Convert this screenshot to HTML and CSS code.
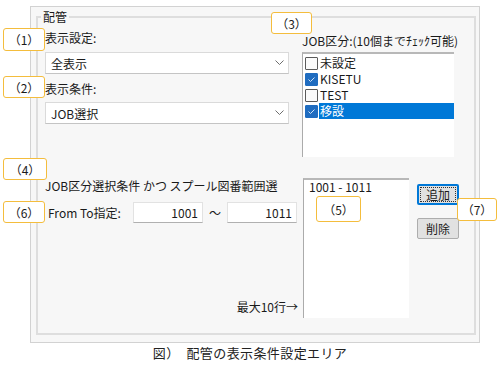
FILE: index.html
```html
<!DOCTYPE html>
<html lang="ja">
<head>
    <meta charset="UTF-8">
    <title>配管の表示条件設定エリア</title>
    <link rel="stylesheet" href="styles.css">
</head>
<body>
    <div class="page">
        <div class="frame">
            <fieldset class="group">
                <legend>配管</legend>
                <div class="top">
                    <div class="col-left">
                        <div class="label l1">表示設定:</div>
                        <div class="combo">
                            <span>全表示</span>
                            <svg width="9" height="6" viewBox="0 0 9 6"><polyline points="0.5,0.5 4.5,4.5 8.5,0.5" fill="none" stroke="#6d6d6d" stroke-width="1"/></svg>
                        </div>
                        <div class="label l2">表示条件:</div>
                        <div class="combo c2">
                            <span>JOB選択</span>
                            <svg width="9" height="6" viewBox="0 0 9 6"><polyline points="0.5,0.5 4.5,4.5 8.5,0.5" fill="none" stroke="#6d6d6d" stroke-width="1"/></svg>
                        </div>
                    </div>
                    <div class="col-right">
                        <div class="label jl">JOB区分:(10個までﾁｪｯｸ可能)</div>
                        <div class="checklist">
                            <div class="item"><span class="box"></span><span class="txt">未設定</span></div>
                            <div class="item"><span class="box checked"><svg width="11" height="11" viewBox="0 0 11 11"><polyline points="2.5,5.5 4.5,7.5 8.5,3.5" fill="none" stroke="#cfe3f7" stroke-width="1"/></svg></span><span class="txt">KISETU</span></div>
                            <div class="item"><span class="box"></span><span class="txt">TEST</span></div>
                            <div class="item"><span class="box checked"><svg width="11" height="11" viewBox="0 0 11 11"><polyline points="2.5,5.5 4.5,7.5 8.5,3.5" fill="none" stroke="#cfe3f7" stroke-width="1"/></svg></span><span class="txt selected">移設</span></div>
                        </div>
                    </div>
                </div>
                <div class="bottom">
                    <div class="cond">
                        <div class="cond-title">JOB区分選択条件 かつ スプール図番範囲選</div>
                        <div class="range">
                            <span class="range-label">From To指定:</span>
                            <div class="num">1001</div>
                            <span class="tilde">～</span>
                            <div class="num">1011</div>
                        </div>
                        <div class="max-note">最大10行→</div>
                    </div>
                    <div class="rangelist">1001 - 1011</div>
                    <div class="btns">
                        <button class="btn focus">追加</button>
                        <button class="btn">削除</button>
                    </div>
                </div>
            </fieldset>
        </div>
        <div class="caption">図）　配管の表示条件設定エリア</div>

        <div class="callout n1">（1）</div>
        <div class="callout n2">（2）</div>
        <div class="callout n3">（3）</div>
        <div class="callout n4">（4）</div>
        <div class="callout n5">（5）</div>
        <div class="callout n6">（6）</div>
        <div class="callout n7">（7）</div>
    </div>
</body>
</html>
```

FILE: styles.css
```css
body {
    margin: 0;
    background: #fff;
    font-family: "Noto Sans CJK JP", "Noto Sans", sans-serif;
    font-size: 12px;
    color: #1a1a1a;
}
.page {
    position: relative;
    width: 500px;
    height: 366px;
    padding: 6px 0 0 30px;
    box-sizing: border-box;
}
.frame {
    width: 450px;
    height: 337px;
    box-sizing: border-box;
    border: 1px solid #d2d2d2;
    background: #f7f7f7;
    padding: 3px 0 0 5px;
}
.group {
    margin: 0;
    padding: 0;
    width: 440px;
    height: 325px;
    box-sizing: border-box;
    border: 2px solid #dedede;
}
.group legend {
    margin-left: 3px;
    padding: 0 2px;
    line-height: 14px;
}
.label {
    line-height: 16px;
    white-space: nowrap;
}
.top {
    display: flex;
}
.col-left {
    margin-left: 7px;
    width: 244px;
}
.l1 {
    margin-top: 6px;
}
.l2 {
    margin-top: 7px;
}
.combo {
    margin-top: 6px;
    height: 22px;
    box-sizing: border-box;
    background: #fff;
    border: 1px solid #dadada;
    border-bottom-color: #c4c4c4;
    display: flex;
    align-items: center;
    justify-content: space-between;
    padding: 0 4px 0 5px;
}
.combo.c2 {
    margin-top: 5px;
}
.col-right {
    margin-left: 13px;
}
.jl {
    margin-top: 9px;
}
.checklist {
    margin-top: 3px;
    width: 152px;
    height: 105px;
    box-sizing: border-box;
    background: #fff;
    border-top: 2px solid #b8b8b8;
    border-left: 1px solid #ababab;
    padding-top: 1px;
}
.item {
    display: flex;
    align-items: center;
    height: 16px;
}
.box {
    width: 13px;
    height: 13px;
    box-sizing: border-box;
    margin-left: 2px;
    border: 1px solid #5a5a5a;
    border-radius: 1px;
    background: #fafafa;
}
.box.checked {
    background: #1f6cc0;
    border-color: #1f6cc0;
}
.box svg {
    display: block;
}
.txt {
    margin-left: 1px;
    line-height: 16px;
    padding-left: 1px;
}
.txt.selected {
    flex: 1;
    background: #0078d7;
    color: #fff;
}
.bottom {
    display: flex;
    margin-top: 21px;
}
.cond {
    margin-left: 7px;
    width: 258px;
}
.cond-title {
    line-height: 16px;
    white-space: nowrap;
}
.range {
    display: flex;
    align-items: center;
    margin-top: 8px;
}
.range-label {
    margin-left: 3px;
    width: 85px;
}
.num {
    width: 70px;
    height: 21px;
    box-sizing: border-box;
    background: #fff;
    border: 1px solid #e2e2e2;
    border-bottom-color: #b0b0b0;
    text-align: right;
    line-height: 19px;
    padding-right: 4px;
}
.tilde {
    width: 24px;
    text-align: center;
}
.max-note {
    margin-top: 76px;
    line-height: 16px;
    text-align: right;
    padding-right: 5px;
}
.rangelist {
    width: 106px;
    height: 140px;
    box-sizing: border-box;
    background: #fff;
    border-top: 2px solid #b8b8b8;
    border-left: 1px solid #ababab;
    padding: 0 0 0 5px;
    line-height: 14px;
}
.btns {
    margin-left: 8px;
    display: flex;
    flex-direction: column;
}
.btn {
    width: 42px;
    height: 21px;
    margin-top: 6px;
    padding: 0;
    font-family: inherit;
    font-size: 12px;
    color: #1a1a1a;
    background: #e1e1e1;
    border: 1px solid #adadad;
    border-radius: 2px;
}
.btn + .btn {
    margin-top: 13px;
}
.btn.focus {
    border: 2px solid #0078d7;
    outline: 1px dotted #333;
    outline-offset: -4px;
}
.caption {
    margin-top: 2px;
    width: 440px;
    text-align: center;
    font-size: 13px;
    line-height: 16px;
    letter-spacing: 0.4px;
    color: #222;
}
.callout {
    position: absolute;
    box-sizing: border-box;
    background: #fff;
    border: 1.5px solid #f4bd3d;
    border-radius: 3px;
    display: flex;
    align-items: center;
    justify-content: center;
    font-size: 12px;
}
.n1 { left: 3px; top: 28px; width: 42px; height: 23px; }
.n2 { left: 3px; top: 76px; width: 42px; height: 22px; }
.n3 { left: 271px; top: 12px; width: 41px; height: 22px; }
.n4 { left: 3px; top: 158px; width: 44px; height: 22px; }
.n5 { left: 316px; top: 196px; width: 45px; height: 26px; }
.n6 { left: 3px; top: 201px; width: 42px; height: 22px; }
.n7 { left: 457px; top: 198px; width: 40px; height: 23px; }
```
